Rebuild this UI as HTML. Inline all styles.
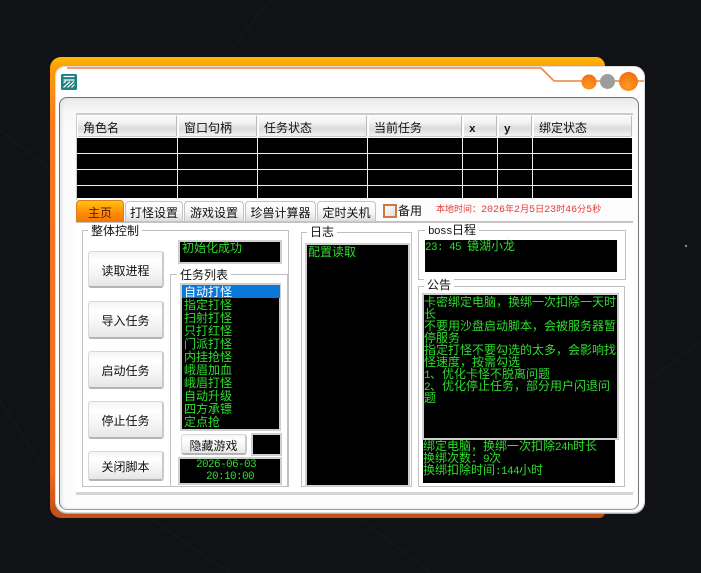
<!DOCTYPE html>
<html><head><meta charset="utf-8"><style>
html,body{margin:0;padding:0}
body{width:701px;height:573px;background:#101215;overflow:hidden;position:relative;font:12px/12px "WenQuanYi Zen Hei","Noto Sans CJK SC",sans-serif;color:#111}
div,span{position:absolute;box-sizing:border-box}
.m{position:static;font-family:"Liberation Mono",monospace;font-size:11px;letter-spacing:-.6px;line-height:0}
.r{position:static;font-family:"Liberation Mono",monospace;font-size:10px;line-height:0}
.h{top:115px;height:22px;background:linear-gradient(#fafafa 0,#f4f4f4 30%,#dcdcdc 62%,#f2f2f2 100%);border:1px solid #fff;border-right:1px solid #bbb;border-bottom:1px solid #ccc;border-radius:2px;line-height:23px;padding-left:5px;white-space:nowrap}
.b{background:#000}
.tab{top:201px;height:20px;background:linear-gradient(#fff,#f6f6f6 55%,#ddd);border:1px solid #c4c4c4;border-bottom:0;border-radius:4px 4px 0 0;text-align:center;line-height:22px;white-space:nowrap}
.g{border:1px solid #c0c0c0;background:#fff}
.l{background:#fff;padding:0 3px;height:12px;white-space:nowrap;line-height:12px}
.btn{left:88px;width:76px;background:linear-gradient(#f4f4f4,#fff 25%,#f4f4f4 65%,#e6e6e6);border:1px solid #d8d8d8;border-bottom:2px solid #b4b4b4;border-right:2px solid #cacaca;border-radius:3px;text-align:center;white-space:nowrap}
.t{color:#2fdc2f;white-space:nowrap}
.box{background:#000;border:2px solid #cfcfcf}
</style></head><body>
<svg style="position:absolute;left:0;top:0" width="701" height="573"><g stroke="#131619" stroke-width="3" fill="none"><path d="M0 130L50 170M0 400L45 470M150 518L230 573M360 518L430 573M270 0L230 50M650 380L701 340"/></g><circle cx="686" cy="246" r="1.200" fill="#8a8a8a"/></svg>

<div style="left:50px;top:57px;width:555px;height:461px;background:linear-gradient(#ffb800 0,#ff9a08 2.500%,#f47a20 15%,#ee6d22 90%,#c4531a 98%,#c4531a 100%);border-radius:11px 9px 6px 11px"></div>
<div style="left:55px;top:66px;width:590px;height:447px;background:#fff;border:1px solid #ddd;border-radius:10px 11px 12px 12px;box-shadow:0 1px 0 #aaa"></div>

<svg style="position:absolute;left:0;top:0" width="701" height="573">
<path d="M67 68H541L554 81H644" fill="none" stroke="#ef8040" stroke-width="1.600"/>
<defs><radialGradient id="o" cx=".45" cy=".75" r=".8"><stop offset="0" stop-color="#ff9a20"/><stop offset="1" stop-color="#f26a10"/></radialGradient></defs>
<circle cx="589" cy="82" r="7.500" fill="url(#o)"/><circle cx="607.500" cy="81.500" r="7.500" fill="#9c9c9c"/><circle cx="628.500" cy="81.500" r="9.500" fill="url(#o)"/>
<rect x="61" y="74" width="16" height="16" rx="1.500" fill="#1a8282"/>
<path d="M63.500 76.500h11M63.500 80h11M63.500 83l2.500-2M63.500 87.500l6.500-6M67.500 87.500l6.500-6M71.500 87.500l3-3" stroke="#fff" stroke-width="1.200" fill="none"/>
</svg>

<div style="left:59px;top:97px;width:580px;height:413px;background:linear-gradient(#e9e9e9,#f8f8f8 14px,#fcfcfc 40px);border:1px solid #707070;border-bottom-color:#999;border-right-color:#777;border-radius:8px;box-shadow:inset 2px 0 3px #e4e4e4"></div>
<div style="left:76px;top:113px;width:557px;height:2px;background:#ccc"></div>
<div style="left:76px;top:113px;width:1px;height:87px;background:#ccc"></div>
<div style="left:76px;top:223px;width:557px;height:270px;background:#fff"></div>
<div style="left:76px;top:492px;width:557px;height:3px;background:#d4d4d4"></div>

<div class="h" style="left:77px;width:100px">角色名</div>
<div class="h" style="left:178px;width:79px">窗口句柄</div>
<div class="h" style="left:258px;width:109px">任务状态</div>
<div class="h" style="left:368px;width:94px">当前任务</div>
<div class="h" style="left:463px;width:34px"><span class="m" style="font-weight:bold">x</span></div>
<div class="h" style="left:498px;width:34px"><span class="m" style="font-weight:bold">y</span></div>
<div class="h" style="left:533px;width:99px">绑定状态</div>

<div class="b" style="left:77px;top:138px;width:555px;height:60px"></div>
<div style="left:77px;top:153px;width:555px;height:1px;background:#eee"></div>
<div style="left:77px;top:169px;width:555px;height:1px;background:#eee"></div>
<div style="left:77px;top:185px;width:555px;height:1px;background:#eee"></div>
<div style="left:177px;top:138px;width:1px;height:60px;background:#eee"></div>
<div style="left:257px;top:138px;width:1px;height:60px;background:#eee"></div>
<div style="left:367px;top:138px;width:1px;height:60px;background:#eee"></div>
<div style="left:462px;top:138px;width:1px;height:60px;background:#eee"></div>
<div style="left:497px;top:138px;width:1px;height:60px;background:#eee"></div>
<div style="left:532px;top:138px;width:1px;height:60px;background:#eee"></div>

<div style="left:76px;top:221px;width:557px;height:2px;background:#c4c4c4"></div>
<div class="tab" style="left:76px;top:200px;width:48px;height:22px;background:linear-gradient(#ffc410,#ff8c08 60%,#f47a08);border:1px solid #e07a20;color:#5a1a00;line-height:23px">主页</div>
<div class="tab" style="left:125px;width:58px">打怪设置</div>
<div class="tab" style="left:184px;width:60px">游戏设置</div>
<div class="tab" style="left:245px;width:71px">珍兽计算器</div>
<div class="tab" style="left:317px;width:59px">定时关机</div>
<div style="left:383px;top:204px;width:14px;height:14px;border:2px solid #d07840;background:linear-gradient(135deg,#fff,#ddd)"></div>
<div style="left:398px;top:205px;white-space:nowrap">备用</div>
<div style="left:436px;top:203px;white-space:nowrap;font-size:9px;color:#e83a3a;line-height:12px">本地时间：<span class="r">2026</span>年<span class="r">2</span>月<span class="r">5</span>日<span class="r">23</span>时<span class="r">46</span>分<span class="r">5</span>秒</div>

<div class="g" style="left:82px;top:230px;width:207px;height:257px"></div>
<div class="l" style="left:88px;top:225px">整体控制</div>
<div class="box" style="left:178px;top:240px;width:104px;height:24px"><span class="t" style="left:2px;top:0">初始化成功</span></div>

<div class="btn" style="top:251px;height:37px;line-height:37px">读取进程</div>
<div class="btn" style="top:301px;height:38px;line-height:38px">导入任务</div>
<div class="btn" style="top:351px;height:38px;line-height:38px">启动任务</div>
<div class="btn" style="top:401px;height:38px;line-height:38px">停止任务</div>
<div class="btn" style="top:451px;height:30px;line-height:30px">关闭脚本</div>

<div class="g" style="left:170px;top:274px;width:118px;height:213px"></div>
<div class="l" style="left:177px;top:269px">任务列表</div>
<div class="box" style="left:180px;top:283px;width:101px;height:148px"></div>
<div style="left:182px;top:285px;width:98px;height:13px;background:#0a78d8"></div>
<div class="t" style="left:184px;top:285px;line-height:13px"><span style="position:static;color:#fff">自动打怪</span><br>指定打怪<br>扫射打怪<br>只打红怪<br>门派打怪<br>内挂抢怪<br>峨眉加血<br>峨眉打怪<br>自动升级<br>四方承镖<br>定点抢</div>

<div class="btn" style="left:181px;top:434px;width:66px;height:21px;line-height:21px">隐藏游戏</div>
<div class="box" style="left:251px;top:433px;width:31px;height:23px"></div>
<div class="box" style="left:178px;top:457px;width:104px;height:28px"></div>
<div class="t m" style="position:absolute;left:196px;top:465px">2026-06-03</div>
<div class="t m" style="position:absolute;left:206px;top:477px">20:10:00</div>

<div class="g" style="left:301px;top:232px;width:111px;height:255px"></div>
<div class="l" style="left:307px;top:226px">日志</div>
<div class="box" style="left:305px;top:243px;width:105px;height:244px"></div>
<div class="t" style="left:308px;top:246px">配置读取</div>

<div class="g" style="left:418px;top:230px;width:208px;height:50px"></div>
<div class="l" style="left:425px;top:224px"><span class="m">boss</span>日程</div>
<div class="b" style="left:425px;top:240px;width:192px;height:32px"></div>
<div class="t" style="left:425px;top:240px"><span class="m" style="white-space:pre">23: 45 </span>镜湖小龙</div>

<div class="g" style="left:418px;top:286px;width:207px;height:201px"></div>
<div class="l" style="left:424px;top:279px">公告</div>
<div class="box" style="left:422px;top:293px;width:197px;height:147px"></div>
<div class="t" style="left:424px;top:296px">卡密绑定电脑，换绑一次扣除一天时<br>长<br>不要用沙盘启动脚本，会被服务器暂<br>停服务<br>指定打怪不要勾选的太多，会影响找<br>怪速度，按需勾选<br><span class="m">1</span>、优化卡怪不脱离问题<br><span class="m">2</span>、优化停止任务，部分用户闪退问<br>题</div>
<div class="b" style="left:423px;top:440px;width:192px;height:43px"></div>
<div class="t" style="left:423px;top:440px">绑定电脑，换绑一次扣除<span class="m">24h</span>时长<br>换绑次数：<span class="m">9</span>次<br>换绑扣除时间<span class="m">:144</span>小时</div>
</body></html>
